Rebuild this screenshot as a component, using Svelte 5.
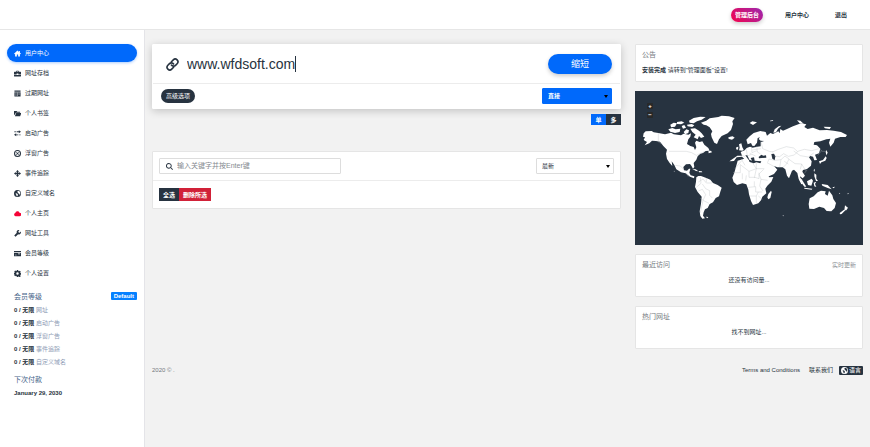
<script lang="ts">
	interface NavItem {
		label: string;
		icon: string;
		active?: boolean;
		red?: boolean;
	}

	const nav: NavItem[] = [
		{ label: '用户中心', icon: 'home', active: true },
		{ label: '网址存档', icon: 'briefcase' },
		{ label: '过期网址', icon: 'calendar' },
		{ label: '个人书签', icon: 'folder' },
		{ label: '启动广告', icon: 'transfer' },
		{ label: '浮窗广告', icon: 'target' },
		{ label: '事件追踪', icon: 'move' },
		{ label: '自定义域名', icon: 'globe' },
		{ label: '个人主页', icon: 'cloud', red: true },
		{ label: '网址工具', icon: 'wrench' },
		{ label: '会员等级', icon: 'card' },
		{ label: '个人设置', icon: 'cog' }
	];

	const limits = ['网址', '启动广告', '浮窗广告', '事件追踪', '自定义域名'];

	// 16x16, filled with even-odd
	const icons: Record<string, string> = {
		home: 'M8 1 0 8.6l1.2 1.2L2.5 8.6V15h4v-4.5h3V15h4V8.6l1.3 1.2L16 8.6l-2.5-2.4V2h-2v2.3z',
		briefcase:
			'M5 4V2.5L6 1.5h4l1 1V4h4l1 1v4h-6V8H6v1H0V5l1-1zM6.5 4h3V3h-3zM0 10h6v1.5h4V10h6v4l-1 1H1l-1-1z',
		calendar:
			'M1 1h14v3H1zM1 5h14v10H1zM3.5 6.5v1.5h2V6.5zM7 6.5v1.5h2V6.5zM10.5 6.5v1.5h2V6.5zM3.5 9.5V11h2V9.5zM7 9.5V11h2V9.5zM10.5 9.5V11h2V9.5zM3.5 12.3v1.2h2v-1.2zM7 12.3v1.2h2v-1.2z',
		folder: 'M0 2h6l1.5 2H14v2H4L1.5 12 0 9zM5 7h12l-3 7H2z',
		transfer: 'M6 3h5V.5L16 4l-5 3.500V5H6zM1 3h3v2H1zM10 10H5V7.500L0 11l5 3.500V12h5zM12 10h3v2h-3z',
		target:
			'M8 0a8 8 0 1 1 0 16A8 8 0 0 1 8 0zM8 2.5a5.5 5.5 0 1 0 0 11 5.5 5.5 0 0 0 0-11zM6 4.8l2 2 2-2L11.2 6l-2 2 2 2-1.2 1.2-2-2-2 2L4.8 10l2-2-2-2z',
		move: 'M8 0l3.500 4H9.500v2.500H12v-2L16 8l-4 3.500v-2H9.500V12h2L8 16l-3.500-4h2V9.500H4v2L0 8l4-3.500v2h2.500V4h-2z',
		globe:
			'M8 0a8 8 0 1 1 0 16A8 8 0 0 1 8 0zM9 1.8 7.5 3.5 9 5l-1 2 3 1 2 2-1 2.5 2-2L14.5 6 12.5 3zM6 7.5l3 3-1 4-2-1-1-3-2-2z',
		cloud: 'M3.5 14A3.5 3.5 0 0 1 3 7.1 5 5 0 0 1 12.6 6 4 4 0 0 1 12.5 14z',
		wrench: 'M15.5 3.5 13 6l-2.5-.5L10 3l2.5-2.5a4.5 4.5 0 0 0-6 6L.5 12.5l3 3 6-6a4.5 4.5 0 0 0 6-6z',
		card: 'M0 2h16v2.5H0zM0 6h16v8H0zM9 8v1.5h5V8zM2 11v1.2h4V11z',
		cog: 'M6.5 0h3l.5 2 1.5.6 1.800-1 2 2-1 1.900.6 1.500 1.100.5v3l-1.100.5-.6 1.500 1 1.900-2 2-1.800-1L10 14l-.5 2h-3L6 14l-1.500-.6-1.800 1-2-2 1-1.900L1 10.500 0 10V7l1.100-.5.6-1.500-1-1.900 2-2 1.800 1L6 2zM8 5.200a2.800 2.800 0 1 0 0 5.600 2.800 2.800 0 0 0 0-5.600z',
		search:
			'M6.5 0a6.5 6.5 0 0 1 5.2 10.300L16 14.500 14.500 16l-4.200-4.300A6.5 6.5 0 1 1 6.5 0zM6.5 2a4.5 4.5 0 1 0 0 9 4.5 4.5 0 0 0 0-9z'
	};

	const land = [
		// North and Central America
		'M26 130l6-6 18-1 6 4 14 2 20 4 18-5 8 5 22 3 8-5 14 3 8-4-2 10-6 8-4 14 10 6 10 3 4 9 4-8-4-14 4-6 10 4 8-2 6 10 12 10 4 8-12 1-8 6-8 2-8 8-4 10-8 10 2 12-4 5-5-9-4-5-12 1-8 8 2 10 9 1 6-6 4 0-3 12 4 8 11 3-1 6-12-5-13-10-14-3-14-9-6-13-8-11 2 14-8-9-8-12-3-16 3-12-11-11-10-13-12-2-12-1-8 8-14 6 7-10-10-6 4-8-6-2z',
		// Canadian Arctic
		'M106 104l10-6 10 2-6 10-12 2z',
		'M100 118l12-4 10 4 14-2-2 10-14 3-14-4z',
		'M126 96l14-2 8 4-10 5-12-1z',
		'M140 108l8-3 5 8-9 3z',
		'M146 126l8-8 8 3-2 8-10 4z',
		'M156 104l14-2 8 4-6 5-14-2z',
		'M162 92l14-8 20-4 16 1-12 8-14 5-10 6-12-2z',
		'M166 116l14-1 12 7 8 8 8 10-10 4-6-6-4 10-12-6 6-8-10-8z',
		'M220 184l8-2 3 5-10 3z',
		// Greenland, Iceland
		'M198 98l16-6 10-7 26-4 10-4 22 2 17 5-7 10 2 8-6 18-10 10-18 8-8 10-6 14-8-4-8-16-2-10 4-8-8-12-10-6-8-2z',
		'M279 143l6-3 8-1 6 4-8 6-9-2z',
		// Caribbean
		'M172 237l10 1 8 6-7-1z',
		'M191 243l9 1 2 3-10 0z',
		// South America
		'M184 262l6-4 8 0 16 6 12 5 8 10 14 6 12 8-4 12-4 14-10 5-8 13-10 5-6 12-8 4-4 9-2 10 6 8-8 1-6-8-2-14 4-23 2-21-12-14-8-15 3-16z',
		'M212 380l8 1-3 4z',
		// Africa
		'M308 212l20-6 12 3 4 7 12 4 8-3 18 4 4 9 6 14 6 12 5 6 12-1-6 14-12 12-6 9 3 14-12 10-4 11-8 9-16 5-6-12-6-20-2-14-6-16-12-3-16 5-10-9-4-13 6-15z',
		'M400 312l8-10 2 4-4 18-6 4-3-6z',
		// Europe and Asia
		'M307 197l14 0-4-11 12-5 6-7 10-4 8 3 14-3 10-1 0-12 10-4-10-1-6-5 4-5-7 2-2 14-8 10-6-1-4-8-10 4-4-14 10-10 12-10 20-6 16 3 4 11 10-8 8 3 16-8 4 6 2-13 8 5 12-5 18-8 24-9 16 3-6 8 10 6 16-4 20 8 22-1 20 2 22 4 18 9-4 6-16 0-16 5-4 12-10 12-4-12 4-12-12 2-18 6-18 2-2 8 10 2 10 10-4 14-12 4 6 16-8 1-4-11-8-2-4 4 8 12-2 13-12 10-12 3-2 5 8 12-7 8-8-6 2 12 6 10-4 2-8-16-4-18-10-10-6 3-9 23-6-8-5-19-8-6-16 0-10-4 10 11-10 13-22 10-12-21-8-19 4-8-20-2-2-10-10 2 4 8-8-3-6-13-6 0 12 17-8 1-14-14-16 2-8 11-14 1z',
		'M312 181l2-8-2-10 7-3 3 12 4 7-4 3z',
		'M304 172l6-2-1 9-6-1z',
		// Russian Arctic islands
		'M344 99l8-5 14 3-12 8z',
		'M415 128l4-10 12-9 8-2-10 9-6 11z',
		'M486 91l10 1 10 9-12-1z',
		'M566 110l22 1-4 6-14-2z',
		'M405 92l10-2-2 3-8 1z',
		// Japan and the islands of the Pacific
		'M574 180l4 8-4 8-2-10z',
		'M552 214l12-4 8-11 3 5-4 8-12 5-4 5z',
		'M536 240l3-4 0 7-2 2z',
		'M538 250l6 4 0 12 5 7-6 0-5-14z',
		'M492 260l8 8 14 22-6 0-16-22z',
		'M508 293l24 3-2 3-22-3z',
		'M516 274l14-8 4 6-5 15-10-2z',
		'M536 278l8-3-4 7 4 9-6-2z',
		'M560 282l18 3 12 13-12-4-16-7z',
		'M592 292l8-2-4 5z',
		'M612 308l4 4-3 0z',
		'M638 309l4 2-4 2z',
		// Australia, New Zealand
		'M524 325l12-6 12-12 10-5 14 2-2 8 8 5 4-15 10 14 3 11 8 12-4 15-10 10-14-1-8-9-14-4-16 7-14-1-2-14z',
		'M580 358l7 0-3 6z',
		'M630 346l5 4 4 3-5 8-6 0z',
		'M627 359l4 2-11 11-5 1-1-4z',
		'M116 244l2-2 1 3z',
		'M443 376l4 1-3 2z'
	];

	const borders = [
		'M70 129l0 27 12 6M102 184l52 0 16 4 14 8 14-7 12-5M121 226l15 2 10 10M152 248l8 12',
		'M190 276l14-9 10 12 17 0M196 262l2 18-14 12M202 282l10 14 12 6 0 14 8 8M190 303l12-5 10 16-8 17M196 325l12 8 14 7M204 332l-8 36M214 264l0 12',
		'M300 236l20-24M294 248l22 0 0-24 26 20 0 18M342 244l22-8 0-18M364 236l24 0M318 206l12 20M352 218l12 18-6 28M322 268l0-18M342 262l18 0 12 4 0-18M386 238l-14 14 6 16 20 3M340 292l22-2 0 16 20 0M358 274l0 16M346 318l18 0 6-12M364 318l0 22M378 268l-4 20 10 15M332 272l2-16M370 318l12 10',
		'M321 196l10 4M334 178l3 20 12-5M349 170l2 18 14-6M365 168l2 18 10 6M351 180l26-4M344 190l18 8M377 150l6 26 20 8 12 2',
		'M412 186l18-8 24-8 22 4 12 11-10 10-18 4-14-8-12 9-16-2M488 184l20-6 22 4 22-6 10 8 12 0M476 183l20 14 24 4 16-12M402 207l18 4 18-2 12-11 12 9-8 16-10 9M438 208l-4 24M462 208l18 13 20 1 12 20M460 222l-12-8M396 218l22 12M402 207l-4 10M500 222l-4 16M548 196l12-14M516 240l-8 10'
	];

	let url = $state('www.wfdsoft.com');
	let redirect = $state('direct');
	let sort = $state('latest');
	let keyword = $state('');
	let multiple = $state(false);
</script>

{#snippet icon(name: string)}
	<svg class="icon" viewBox="0 0 16 16" aria-hidden="true">
		<path d={icons[name]} fill="currentColor" fill-rule="evenodd" />
	</svg>
{/snippet}

<div class="page">
	<header>
		<a class="admin" href="#admin">管理后台</a>
		<a href="#user">用户中心</a>
		<a href="#logout">退出</a>
	</header>

	<div class="body">
		<aside>
			<nav>
				{#each nav as item}
					<a href="#nav" class:active={item.active} class:red={item.red}>
						{@render icon(item.icon)}
						<span>{item.label}</span>
					</a>
				{/each}
			</nav>

			<section class="plan">
				<h3>会员等级 <span class="badge">Default</span></h3>
				{#each limits as limit}
					<p><b>0 / 无限</b> {limit}</p>
				{/each}
				<h3>下次付款</h3>
				<p><b>January 29, 2030</b></p>
			</section>
		</aside>

		<main>
			<div class="columns">
				<div class="left">
					<form class="card shorten" onsubmit={(e) => e.preventDefault()}>
						<div class="url-row">
							<svg class="link" viewBox="0 0 24 24" aria-hidden="true">
								<g fill="none" stroke="currentColor" stroke-width="3" stroke-linecap="round">
									<path d="M10 13a5 5 0 0 0 7.540.540l3-3a5 5 0 0 0-7.070-7.070l-3.500 3.500" />
									<path d="M14 11a5 5 0 0 0-7.540-.540l-3 3a5 5 0 0 0 7.070 7.070l3.500-3.500" />
								</g>
							</svg>
							<input class="url" type="text" aria-label="网址" bind:value={url} />
							<button class="submit" type="submit">缩短</button>
						</div>
						<div class="option-row">
							<button class="advanced" type="button">高级选项</button>
							<div class="select blue">
								<select aria-label="跳转方式" bind:value={redirect}>
									<option value="direct">直接</option>
								</select>
							</div>
						</div>
					</form>

					<div class="toggle">
						<button class:on={!multiple} onclick={() => (multiple = false)}>单</button>
						<button class:on={multiple} onclick={() => (multiple = true)}>多</button>
					</div>

					<section class="card list">
						<div class="search-row">
							<label class="search">
								{@render icon('search')}
								<input
									type="text"
									aria-label="搜索"
									placeholder="输入关键字并按Enter键"
									bind:value={keyword}
								/>
							</label>
							<div class="select">
								<select aria-label="排序" bind:value={sort}>
									<option value="latest">最新</option>
								</select>
							</div>
						</div>
						<div class="bulk">
							<button>全选</button>
							<button class="danger">删除所选</button>
						</div>
					</section>
				</div>

				<div class="right">
					<section class="card notice">
						<h2>公告</h2>
						<p><b>安装完成</b> 请转到"管理面板"设置!</p>
					</section>

					<div class="map">
						<svg viewBox="0 3 684 462" role="img" aria-label="访问地图">
							{#each land as d}
								<path class="land" {d} />
							{/each}
							<path class="sea" d="M409 192l8-1 4 8-2 12-7-5z" />
							<path class="sea" d="M371 201l8-7 6 3 8-1 1 7-13 1-9 1z" />
							{#each borders as d}
								<path class="border" {d} />
							{/each}
						</svg>
						<div class="zoom">
							<button aria-label="放大">+</button>
							<button aria-label="缩小">−</button>
						</div>
					</div>

					<section class="card activity">
						<h2>最近访问 <a href="#live">实时更新</a></h2>
						<p>还没有访问量...</p>
					</section>

					<section class="card activity">
						<h2>热门网址</h2>
						<p>找不到网址...</p>
					</section>
				</div>
			</div>

			<footer>
				<span>2020 © .</span>
				<a href="#terms">Terms and Conditions</a>
				<a href="#contact">联系我们</a>
				<a class="lang" href="#lang">{@render icon('globe')} 语言</a>
			</footer>
		</main>
	</div>
</div>

<style>
	:global(body) {
		margin: 0;
		background: #f2f2f2;
	}

	.page {
		display: flex;
		flex-direction: column;
		min-height: 100vh;
		color: #273340;
		font-family: 'Liberation Sans', 'Noto Sans CJK SC', sans-serif;
		font-size: 6px;
		line-height: 12px;
	}

	.page * {
		box-sizing: border-box;
	}

	a {
		color: inherit;
		text-decoration: none;
	}

	h2,
	h3,
	p {
		margin: 0;
		font-weight: normal;
	}

	button,
	input,
	select {
		margin: 0;
		padding: 0;
		border: 0;
		outline: 0;
		color: inherit;
		font: inherit;
	}

	button {
		color: #fff;
		font-weight: bold;
		cursor: pointer;
	}

	.icon {
		flex: none;
		width: 7px;
		height: 7px;
	}

	header {
		display: flex;
		align-items: center;
		justify-content: flex-end;
		gap: 18px;
		height: 30px;
		padding-right: 19px;
		border-bottom: 1px solid #e6e6e6;
		background: #fff;
		font-weight: bold;
	}

	header a {
		padding: 0 4px;
	}

	header .admin {
		border-radius: 7px;
		background: linear-gradient(45deg, #f5044b, #9c27b0);
		box-shadow: 0 2px 4px #0003;
		color: #fff;
		line-height: 14px;
	}

	.body {
		display: flex;
		flex: 1;
	}

	aside {
		flex: none;
		width: 145px;
		padding: 14px 7px;
		border-right: 1px solid #e4e4e8;
		background: #fff;
	}

	nav {
		display: flex;
		flex-direction: column;
		gap: 2px;
	}

	nav a {
		display: flex;
		align-items: center;
		gap: 4px;
		height: 18px;
		padding: 0 7px;
		border-radius: 9px;
	}

	nav .active {
		background: #0069fb;
		box-shadow: 0 1px 3px #0069fb55;
		color: #fff;
	}

	nav .red .icon {
		color: #f50437;
	}

	.plan {
		padding: 6px 0 0 7px;
		color: #8e9bb5;
		line-height: 13px;
	}

	.plan h3 {
		display: flex;
		align-items: center;
		justify-content: space-between;
		height: 16px;
		color: #466489;
		font-size: 7px;
	}

	.plan p + h3 {
		margin-top: 2px;
	}

	.plan b {
		color: #273340;
	}

	.badge {
		padding: 0 3px;
		border-radius: 1px;
		background: #0580ff;
		color: #fff;
		font-size: 6px;
		font-weight: bold;
		line-height: 8px;
	}

	main {
		flex: 1;
		min-width: 0;
		padding: 14px 7px;
	}

	.columns {
		display: grid;
		grid-template-columns: 469fr 228fr;
		gap: 14px;
		align-items: start;
	}

	.card {
		border: 1px solid #e5e5e5;
		border-radius: 1px;
		background: #fff;
	}

	.shorten {
		border-color: #fff;
		box-shadow: 0 2px 8px #0003;
	}

	.url-row {
		display: flex;
		align-items: center;
		height: 39px;
		padding: 0 8px 0 13px;
		border-bottom: 1px solid #ececec;
	}

	.link {
		width: 13px;
		height: 13px;
		margin-right: 8px;
	}

	.url {
		field-sizing: content;
		min-width: 20px;
		border-right: 1px solid #273340;
		font-size: 14px;
		line-height: 16px;
	}

	.submit {
		width: 64px;
		height: 20px;
		margin-left: auto;
		border-radius: 10px;
		background: #0069fb;
		box-shadow: 0 2px 4px #0003;
		font-size: 9px;
		font-weight: normal;
	}

	.option-row {
		display: flex;
		align-items: center;
		justify-content: space-between;
		height: 24px;
		padding: 0 8px;
	}

	.advanced {
		height: 14px;
		padding: 0 5px;
		border-radius: 7px;
		background: #273340;
		font-weight: normal;
	}

	.select {
		position: relative;
		width: 78px;
	}

	.select::after {
		content: '';
		position: absolute;
		top: 7px;
		right: 4px;
		border: 2px solid transparent;
		border-top: 3px solid #000;
		border-bottom: 0;
		pointer-events: none;
	}

	select {
		appearance: none;
		display: block;
		width: 100%;
		height: 16px;
		padding: 0 5px;
		border: 1px solid #ddd;
		border-radius: 1px;
		background: #fff;
	}

	.blue {
		width: 70px;
	}

	.blue select {
		border-color: #0069fb;
		background: #0069fb;
		color: #fff;
		font-weight: bold;
	}

	.toggle {
		display: flex;
		justify-content: flex-end;
		margin: 5px 0 26px;
	}

	.toggle button {
		width: 15px;
		height: 11px;
		background: #273340;
	}

	.toggle .on {
		background: #0069fb;
	}

	.search-row {
		display: flex;
		align-items: center;
		justify-content: space-between;
		height: 29px;
		padding: 0 6px;
		border-bottom: 1px solid #ececec;
	}

	.search {
		display: flex;
		flex: 0 0 40%;
		align-items: center;
		gap: 4px;
		height: 16px;
		padding: 0 6px;
		border: 1px solid #ddd;
		border-radius: 1px;
	}

	.search input {
		flex: 1;
		min-width: 0;
		font-size: 7px;
	}

	.search input::placeholder {
		color: #858a90;
	}

	.bulk {
		display: flex;
		padding: 7px 6px;
	}

	.bulk button {
		height: 13px;
		padding: 0 4px;
		background: #273340;
	}

	.bulk .danger {
		background: #d12138;
	}

	.right {
		display: flex;
		flex-direction: column;
		gap: 9px;
	}

	.right .card {
		padding: 4px 6px;
	}

	h2 {
		display: flex;
		justify-content: space-between;
		color: #74797e;
		font-size: 7px;
	}

	h2 a {
		color: #8d9297;
		font-size: 6px;
	}

	.notice p {
		padding: 3px 0 1px;
	}

	.activity p {
		padding: 3px 0 6px;
		text-align: center;
	}

	.map {
		position: relative;
		background: #273340;
	}

	.map svg {
		display: block;
		width: 100%;
	}

	.land {
		fill: #fff;
	}

	.sea {
		fill: #273340;
	}

	.border {
		fill: none;
		stroke: #b4b8bc;
		stroke-width: 1;
	}

	.zoom {
		position: absolute;
		top: 12px;
		left: 12px;
		display: grid;
		gap: 3px;
	}

	.zoom button {
		width: 6px;
		height: 6px;
		border-radius: 1px;
		background: #292929;
		line-height: 6px;
	}

	footer {
		display: flex;
		align-items: center;
		gap: 9px;
		margin-top: 15px;
	}

	footer span {
		margin-right: auto;
		color: #74797e;
	}

	footer .lang {
		display: flex;
		align-items: center;
		gap: 1px;
		margin-left: -3px;
		padding: 0 2px;
		border-radius: 1px;
		background: #273340;
		color: #fff;
		line-height: 9px;
	}
</style>
